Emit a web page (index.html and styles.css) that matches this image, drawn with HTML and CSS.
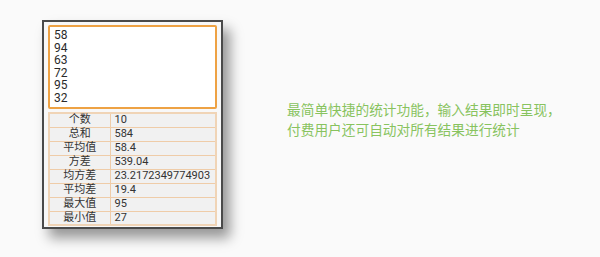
FILE: index.html
```html
<!DOCTYPE html>
<html lang="zh-CN">
<head>
  <meta charset="UTF-8">
  <title>统计</title>
  <link rel="stylesheet" href="styles.css">
</head>
<body>

<div class="page">
  <!-- phone screen -->
  <div class="device">
    <div class="input-box">
      <div>58</div>
      <div>94</div>
      <div>63</div>
      <div>72</div>
      <div>95</div>
      <div>32</div>
    </div>
    <table class="stats">
      <tr><td class="label">个数</td><td>10</td></tr>
      <tr><td class="label">总和</td><td>584</td></tr>
      <tr><td class="label">平均值</td><td>58.4</td></tr>
      <tr><td class="label">方差</td><td>539.04</td></tr>
      <tr><td class="label">均方差</td><td>23.2172349774903</td></tr>
      <tr><td class="label">平均差</td><td>19.4</td></tr>
      <tr><td class="label">最大值</td><td>95</td></tr>
      <tr><td class="label">最小值</td><td>27</td></tr>
    </table>
  </div>

  <p class="caption">最简单快捷的统计功能，输入结果即时呈现，<br>付费用户还可自动对所有结果进行统计</p>
</div>

</body>
</html>
```

FILE: styles.css
```css
* { margin: 0; padding: 0; box-sizing: border-box; }
body {
  background: #fafafa;
  font-family: Roboto, "Noto Sans CJK SC", sans-serif;
  overflow: hidden;
}

.page {
  display: flex;
  align-items: flex-start;
  padding: 20px 0 0 42px;
  height: 257px;
}

.device {
  width: 181px;
  height: 209px;
  border: 2px solid #4a4a4a;
  background: #f8f8f8;
  padding: 3px 4px 1px 4px;
  display: flex;
  flex-direction: column;
  gap: 3px;
  box-shadow: 7px 9px 12px rgba(0, 0, 0, 0.4);
}

.input-box {
  height: 85px;
  border: 2px solid #eea244;
  border-radius: 2px;
  background: #fff;
  padding: 2px 0 0 4px;
  font-size: 12px;
  line-height: 12.6px;
  color: #2a2a2a;
}

.stats {
  width: 100%;
  border-collapse: collapse;
  border: 2px solid #f0d4b6;
  background: #f1f1f1;
  font-size: 11px;
  color: #333;
}
.stats td {
  height: 14px;
  padding: 0 0 0 4px;
  border: 1px solid #efcca8;
  line-height: 12px;
}
.stats .label {
  width: 61px;
  text-align: center;
  padding: 0;
}

.caption {
  margin: 79px 0 0 64px;
  font-size: 13.7px;
  line-height: 20px;
  color: #88c35e;
  font-family: "Noto Sans CJK SC", sans-serif;
}
```
